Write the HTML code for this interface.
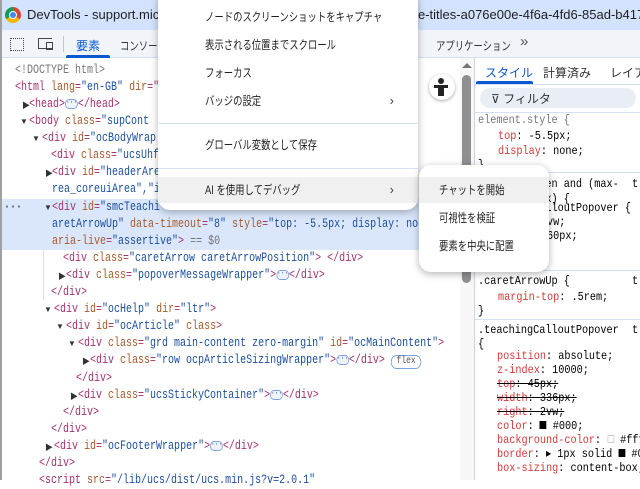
<!DOCTYPE html>
<html><head><meta charset="utf-8"><style>
*{margin:0;padding:0;box-sizing:border-box}
body{width:640px;height:480px;overflow:hidden;background:#fff;position:relative;font-family:"Liberation Sans","Noto Sans CJK JP",sans-serif}
.a{position:absolute;white-space:nowrap}
.m{font-family:"Liberation Mono","Noto Sans CJK JP",monospace;font-size:12.5px;line-height:17px;height:17px;transform:scaleX(0.8);transform-origin:0 0}
.t{color:#a4326e}.n{color:#a85a2b}.v{color:#1c4f9e}.g{color:#777}.k{color:#222}
.tri{font-size:8px;color:#333;position:absolute}
.dots{display:inline-block;width:16px;height:10px;border:1px solid #7aa1e0;border-radius:5px;background:#eef3fc;font-size:8px;line-height:6px;text-align:center;color:#1c4f9e;vertical-align:middle}
.s{font-family:"Liberation Mono",monospace;font-size:12px;line-height:14px;transform:scaleX(0.85);transform-origin:0 0}
.p{color:#d33a3a}
.mi{position:absolute;left:0;width:260px;height:26px;line-height:26px;padding-left:47px;font-size:12px;color:#1f1f1f}
.c{display:inline-block;transform:scaleX(0.78);transform-origin:0 0}
.ch{position:absolute;right:24px;top:0;color:#444;font-size:13px}
.sep{position:absolute;left:0;width:260px;height:1px;background:#d3dff3}
</style></head><body>
<!-- title bar -->
<div class="a" style="left:0;top:0;width:640px;height:30px;background:#d3e3fd"></div>
<div class="a" style="left:5px;top:7px;width:16px;height:16px;border-radius:50%;background:conic-gradient(#db4437 0 120deg,#f4b400 120deg 240deg,#0f9d58 240deg 360deg)"></div>
<div class="a" style="left:9px;top:11px;width:8px;height:8px;border-radius:50%;background:#4285f4;border:1.5px solid #fff"></div>
<div class="a" style="left:27px;top:7px;font-size:13px;color:#1f1f1f">DevTools - support.microsoft.com</div>
<div class="a" style="left:418px;top:7px;font-size:13px;color:#1f1f1f">e-titles-a076e00e-4f6a-4fd6-85ad-b4170b</div>
<!-- toolbar -->
<div class="a" style="left:0;top:30px;width:640px;height:28px;background:#f1f4f9;border-bottom:1px solid #d3dff3"></div>
<div class="a" style="left:10px;top:38px;width:14px;height:13px;border:1.5px dotted #444"></div>
<div class="a" style="left:38px;top:38px;width:14px;height:11px;border:1.5px solid #444;border-right:none"></div>
<div class="a" style="left:46px;top:42px;width:7px;height:8px;border:1.5px solid #444"></div>
<div class="a" style="left:63px;top:36px;width:1px;height:16px;background:#c4c7cc"></div>
<div class="a" style="left:76px;top:37px;font-size:12px;color:#0b57d0">要素</div>
<div class="a" style="left:66px;top:55px;width:44px;height:3px;background:#0b57d0;border-radius:2px 2px 0 0"></div>
<div class="a" style="left:120px;top:37px;font-size:12px;color:#333"><span class="c">コンソール</span></div>
<div class="a" style="left:436px;top:37px;font-size:12px;color:#333"><span class="c">アプリケーション</span></div>
<div class="a" style="left:520px;top:33px;font-size:15px;color:#555">»</div>
<div class="a" style="left:0;top:0;width:2px;height:480px;background:#a0a0a0"></div>
<!-- elements pane -->
<div class="a" style="left:2px;top:199px;width:472px;height:51px;background:#d9e6fc"></div>
<div class="a" style="left:43px;top:250px;width:1px;height:50px;background:#e0e0e0"></div>
<div class="a m g" style="left:15px;top:62px">&lt;!DOCTYPE html&gt;</div>
<div class="a m" style="left:15px;top:79px"><span class="t">&lt;html</span> <span class="n">lang</span><span class="t">=</span><span class="v">"en-GB"</span> <span class="n">dir</span><span class="t">="</span></div>
<div class="tri" style="left:22px;top:100px">▶</div>
<div class="a m" style="left:29px;top:96px"><span class="t">&lt;head&gt;</span><span class="dots">···</span><span class="t">&lt;/head&gt;</span></div>
<div class="tri" style="left:20px;top:117px">▼</div>
<div class="a m" style="left:29px;top:113px"><span class="t">&lt;body</span> <span class="n">class</span><span class="t">=</span><span class="v">"supCont </span></div>
<div class="tri" style="left:32px;top:134px">▼</div>
<div class="a m" style="left:42px;top:130px"><span class="t">&lt;div</span> <span class="n">id</span><span class="t">=</span><span class="v">"ocBodyWrap</span></div>
<div class="a m" style="left:51px;top:147px"><span class="t">&lt;div</span> <span class="n">class</span><span class="t">=</span><span class="v">"ucsUhf</span></div>
<div class="tri" style="left:45px;top:168px">▶</div>
<div class="a m" style="left:52px;top:164px"><span class="t">&lt;div</span> <span class="n">id</span><span class="t">=</span><span class="v">"headerAre</span></div>
<div class="a m" style="left:52px;top:181px"><span class="v">rea_coreuiArea","i</span></div>
<div class="a m k" style="left:4px;top:199px">···</div>
<div class="tri" style="left:44px;top:203px">▼</div>
<div class="a m" style="left:52px;top:199px"><span class="t">&lt;div</span> <span class="n">id</span><span class="t">=</span><span class="v">"smcTeachi</span></div>
<div class="a m" style="left:52px;top:216px"><span class="v">aretArrowUp"</span> <span class="n">data-timeout</span><span class="t">=</span><span class="v">"8"</span> <span class="n">style</span><span class="t">=</span><span class="v">"top: -5.5px; display: none;"</span></div>
<div class="a m" style="left:52px;top:233px"><span class="n">aria-live</span><span class="t">=</span><span class="v">"assertive"</span><span class="t">&gt;</span> <span class="g">== $0</span></div>
<div class="a m" style="left:63px;top:250px"><span class="t">&lt;div</span> <span class="n">class</span><span class="t">=</span><span class="v">"caretArrow caretArrowPosition"</span><span class="t">&gt; &lt;/div&gt;</span></div>
<div class="tri" style="left:58px;top:271px">▶</div>
<div class="a m" style="left:66px;top:267px"><span class="t">&lt;div</span> <span class="n">class</span><span class="t">=</span><span class="v">"popoverMessageWrapper"</span><span class="t">&gt;</span><span class="dots">···</span><span class="t">&lt;/div&gt;</span></div>
<div class="a m t" style="left:51px;top:284px">&lt;/div&gt;</div>
<div class="tri" style="left:44px;top:305px">▼</div>
<div class="a m" style="left:54px;top:301px"><span class="t">&lt;div</span> <span class="n">id</span><span class="t">=</span><span class="v">"ocHelp"</span> <span class="n">dir</span><span class="t">=</span><span class="v">"ltr"</span><span class="t">&gt;</span></div>
<div class="tri" style="left:56px;top:322px">▼</div>
<div class="a m" style="left:66px;top:318px"><span class="t">&lt;div</span> <span class="n">id</span><span class="t">=</span><span class="v">"ocArticle"</span> <span class="n">class</span><span class="t">&gt;</span></div>
<div class="tri" style="left:68px;top:339px">▼</div>
<div class="a m" style="left:78px;top:335px"><span class="t">&lt;div</span> <span class="n">class</span><span class="t">=</span><span class="v">"grd main-content zero-margin"</span> <span class="n">id</span><span class="t">=</span><span class="v">"ocMainContent"</span><span class="t">&gt;</span></div>
<div class="tri" style="left:82px;top:356px">▶</div>
<div class="a m" style="left:90px;top:352px"><span class="t">&lt;div</span> <span class="n">class</span><span class="t">=</span><span class="v">"row ocpArticleSizingWrapper"</span><span class="t">&gt;</span><span class="dots">···</span><span class="t">&lt;/div&gt;</span> <span style="display:inline-block;border:1px solid #7aa1e0;border-radius:8px;font-size:10px;line-height:12px;padding:0 6px;color:#555">flex</span></div>
<div class="a m t" style="left:76px;top:370px">&lt;/div&gt;</div>
<div class="tri" style="left:70px;top:391px">▶</div>
<div class="a m" style="left:78px;top:387px"><span class="t">&lt;div</span> <span class="n">class</span><span class="t">=</span><span class="v">"ucsStickyContainer"</span><span class="t">&gt;</span><span class="dots">···</span><span class="t">&lt;/div&gt;</span></div>
<div class="a m t" style="left:63px;top:404px">&lt;/div&gt;</div>
<div class="a m t" style="left:51px;top:421px">&lt;/div&gt;</div>
<div class="tri" style="left:45px;top:442px">▶</div>
<div class="a m" style="left:54px;top:438px"><span class="t">&lt;div</span> <span class="n">id</span><span class="t">=</span><span class="v">"ocFooterWrapper"</span><span class="t">&gt;</span><span class="dots">···</span><span class="t">&lt;/div&gt;</span></div>
<div class="a m t" style="left:39px;top:455px">&lt;/div&gt;</div>
<div class="a m" style="left:39px;top:472px"><span class="t">&lt;script</span> <span class="n">src</span><span class="t">=</span><span class="v">"/lib/ucs/dist/ucs.min.js?v=2.0.1"</span></div>
<!-- a11y button + scrollbar -->
<div class="a" style="left:429px;top:74px;width:26px;height:26px;border-radius:50%;background:#fff;box-shadow:0 1px 3px rgba(0,0,0,.35)"></div>
<div class="a" style="left:438px;top:78px;width:6px;height:6px;border-radius:50%;background:#222"></div>
<div class="a" style="left:434px;top:85px;width:14px;height:3px;background:#222"></div>
<div class="a" style="left:438px;top:85px;width:6px;height:11px;background:#222"></div>
<div class="a" style="left:460px;top:58px;width:14px;height:422px;background:#f7f7f7"></div>
<div class="a" style="left:462px;top:63px;width:0;height:0;border-left:5px solid transparent;border-right:5px solid transparent;border-bottom:5px solid #777"></div>
<div class="a" style="left:462px;top:75px;width:9px;height:208px;background:#8f8f8f;border-radius:5px"></div>
<div class="a" style="left:474px;top:58px;width:1px;height:422px;background:#c7d7f1"></div>
<!-- styles pane -->
<div class="a" style="left:485px;top:64px;font-size:12px;color:#0b57d0">スタイル</div>
<div class="a" style="left:476px;top:81px;width:57px;height:3px;background:#0b57d0;border-radius:2px 2px 0 0"></div>
<div class="a" style="left:543px;top:64px;font-size:12px;color:#333">計算済み</div>
<div class="a" style="left:610px;top:64px;font-size:12px;color:#333">レイアウト</div>
<div class="a" style="left:475px;top:84px;width:165px;height:1px;background:#d3dff3"></div>
<div class="a" style="left:480px;top:88px;width:156px;height:20px;border-radius:10px;background:#e9eef6"></div>
<div class="a" style="left:491px;top:90px;font-size:12px;color:#333">⊽ フィルタ</div>
<div class="a" style="left:475px;top:112px;width:165px;height:1px;background:#d3dff3"></div>
<div class="a s g" style="left:478px;top:113px">element.style {</div>
<div class="a s" style="left:498px;top:129px"><span class="p">top</span>: -5.5px;</div>
<div class="a s" style="left:498px;top:144px"><span class="p">display</span>: none;</div>
<div class="a s" style="left:478px;top:158px">}</div>
<div class="a" style="left:475px;top:172px;width:165px;height:1px;background:#d3dff3"></div>
<div class="a s" style="left:478px;top:177px">@media screen and (max-</div>
<div class="a s" style="left:632px;top:177px">t</div>
<div class="a s" style="left:478px;top:192px">width: 768px) {</div>
<div class="a s" style="left:478px;top:201px">.teachingCalloutPopover {</div>
<div class="a s" style="left:498px;top:215px"><span class="p">right</span>: 2vw;</div>
<div class="a s" style="left:498px;top:229px"><span class="p">width</span>: 260px;</div>
<div class="a" style="left:475px;top:270px;width:165px;height:1px;background:#d3dff3"></div>
<div class="a s" style="left:478px;top:274px">.caretArrowUp {</div>
<div class="a s" style="left:632px;top:274px">t</div>
<div class="a s" style="left:498px;top:290px"><span class="p">margin-top</span>: .5rem;</div>
<div class="a s" style="left:478px;top:304px">}</div>
<div class="a" style="left:475px;top:319px;width:165px;height:1px;background:#d3dff3"></div>
<div class="a s" style="left:478px;top:323px">.teachingCalloutPopover</div>
<div class="a s" style="left:632px;top:323px">t</div>
<div class="a s" style="left:478px;top:337px">{</div>
<div class="a s" style="left:497px;top:349px"><span class="p">position</span>: absolute;</div>
<div class="a s" style="left:497px;top:363px"><span class="p">z-index</span>: 10000;</div>
<div class="a s" style="left:497px;top:377px;text-decoration:line-through"><span class="p">top</span>: 45px;</div>
<div class="a s" style="left:497px;top:391px;text-decoration:line-through"><span class="p">width</span>: 336px;</div>
<div class="a s" style="left:497px;top:405px;text-decoration:line-through"><span class="p">right</span>: 2vw;</div>
<div class="a s" style="left:497px;top:419px"><span class="p">color</span>: <span style="display:inline-block;width:8px;height:8px;background:#000"></span> #000;</div>
<div class="a s" style="left:497px;top:433px"><span class="p">background-color</span>: <span style="display:inline-block;width:8px;height:8px;border:1px solid #ccc"></span> #fff;</div>
<div class="a s" style="left:497px;top:447px"><span class="p">border</span>: ▸ 1px solid <span style="display:inline-block;width:8px;height:8px;background:#000"></span> #000;</div>
<div class="a s" style="left:497px;top:461px"><span class="p">box-sizing</span>: content-box;</div>
<!-- context menu -->
<div class="a" style="left:158px;top:-10px;width:260px;height:220px;background:#fff;border-radius:12px;box-shadow:0 2px 8px rgba(0,0,0,.3)">
 <div class="mi" style="top:14px"><span class="c">ノードのスクリーンショットをキャプチャ</span></div>
 <div class="mi" style="top:42px"><span class="c">表示される位置までスクロール</span></div>
 <div class="mi" style="top:70px"><span class="c">フォーカス</span></div>
 <div class="mi" style="top:98px"><span class="c">バッジの設定</span><span class="ch">›</span></div>
 <div class="sep" style="top:133px"></div>
 <div class="mi" style="top:142px"><span class="c">グローバル変数として保存</span></div>
 <div class="sep" style="top:178px"></div>
 <div class="mi" style="top:187px;background:#f0f0f0"><span class="c">AI を使用してデバッグ</span><span class="ch">›</span></div>
</div>
<div class="a" style="left:419px;top:165px;width:130px;height:107px;background:#fff;border-radius:12px;box-shadow:0 2px 8px rgba(0,0,0,.3);overflow:hidden">
 <div class="mi" style="top:12px;width:130px;padding-left:20px;background:#f0f0f0"><span class="c">チャットを開始</span></div>
 <div class="mi" style="top:40px;width:130px;padding-left:20px"><span class="c">可視性を検証</span></div>
 <div class="mi" style="top:68px;width:130px;padding-left:20px"><span class="c">要素を中央に配置</span></div>
</div>
</body></html>
